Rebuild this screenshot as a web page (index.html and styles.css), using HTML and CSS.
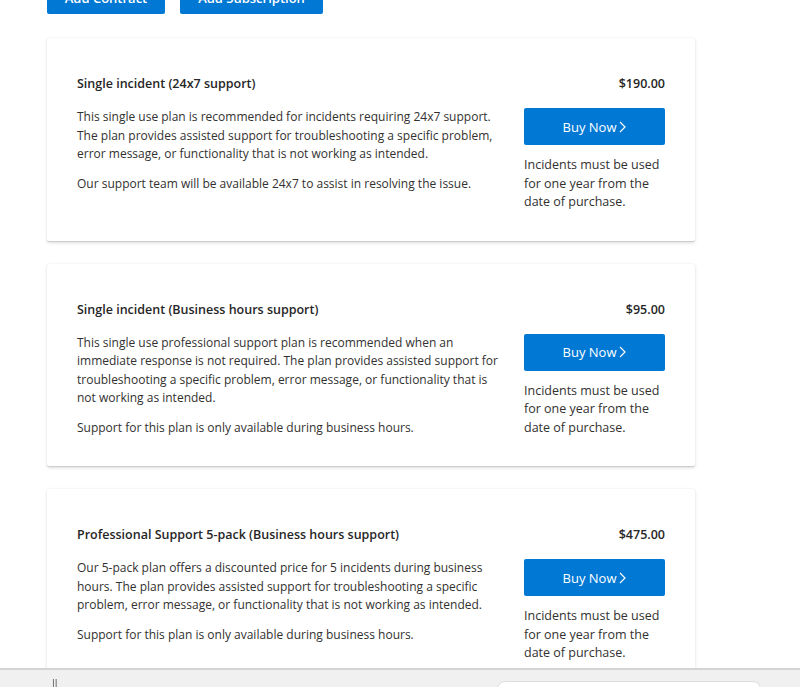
FILE: index.html
```html
<!DOCTYPE html>
<html lang="en">
<head>
  <meta charset="UTF-8">
  <meta name="viewport" content="width=device-width, initial-scale=1.0">
  <title>Support Plans</title>
  <link rel="stylesheet" href="styles.css">
</head>
<body>
  <div class="page">
    <div class="toolbar">
      <button class="btn-top btn-contract">Add Contract</button>
      <button class="btn-top btn-subscription">Add Subscription</button>
    </div>

    <div class="plan">
      <div class="plan-head">
        <span class="plan-title">Single incident (24x7 support)</span>
        <span class="plan-price">$190.00</span>
      </div>
      <div class="plan-body">
        <div class="plan-desc">
          <p>This single use plan is recommended for incidents requiring 24x7 support. The plan provides assisted support for troubleshooting a specific problem, error message, or functionality that is not working as intended.</p>
          <p>Our support team will be available 24x7 to assist in resolving the issue.</p>
        </div>
        <div class="plan-buy">
          <button class="buy">Buy Now <svg class="chev" width="7" height="12" viewBox="0 0 7 12"><path d="M1 1l5 5-5 5" fill="none" stroke="#fff" stroke-width="1.2"/></svg></button>
          <p class="note">Incidents must be used for one year from the date of purchase.</p>
        </div>
      </div>
    </div>

    <div class="plan">
      <div class="plan-head">
        <span class="plan-title">Single incident (Business hours support)</span>
        <span class="plan-price">$95.00</span>
      </div>
      <div class="plan-body">
        <div class="plan-desc">
          <p>This single use professional support plan is recommended when an immediate response is not required. The plan provides assisted support for troubleshooting a specific problem, error message, or functionality that is not working as intended.</p>
          <p>Support for this plan is only available during business hours.</p>
        </div>
        <div class="plan-buy">
          <button class="buy">Buy Now <svg class="chev" width="7" height="12" viewBox="0 0 7 12"><path d="M1 1l5 5-5 5" fill="none" stroke="#fff" stroke-width="1.2"/></svg></button>
          <p class="note">Incidents must be used for one year from the date of purchase.</p>
        </div>
      </div>
    </div>

    <div class="plan">
      <div class="plan-head">
        <span class="plan-title">Professional Support 5-pack (Business hours support)</span>
        <span class="plan-price">$475.00</span>
      </div>
      <div class="plan-body">
        <div class="plan-desc">
          <p>Our 5-pack plan offers a discounted price for 5 incidents during business hours. The plan provides assisted support for troubleshooting a specific problem, error message, or functionality that is not working as intended.</p>
          <p>Support for this plan is only available during business hours.</p>
        </div>
        <div class="plan-buy">
          <button class="buy">Buy Now <svg class="chev" width="7" height="12" viewBox="0 0 7 12"><path d="M1 1l5 5-5 5" fill="none" stroke="#fff" stroke-width="1.2"/></svg></button>
          <p class="note">Incidents must be used for one year from the date of purchase.</p>
        </div>
      </div>
    </div>
  </div>

  <!-- browser download strip overlapping the bottom of the page -->
  <div class="bottom-bar">
    <span class="bar-label">ll</span>
    <div class="bar-box"></div>
  </div>
</body>
</html>
```

FILE: styles.css
```css
body {
  font-family: 'Open Sans', 'Noto Sans', sans-serif;
  margin: 0;
  padding: 0;
  background-color: #fff;
  color: #323130;
  overflow: hidden;
}
.page {
  width: 648px;
  margin-left: 47px;
}
.toolbar {
  display: flex;
  gap: 15px;
  margin-top: -18px;
  margin-bottom: 24px;
}
.btn-top {
  height: 32px;
  background-color: #0078d4;
  color: white;
  border: none;
  border-radius: 2px;
  font-family: inherit;
  font-size: 13px;
  font-weight: 600;
  padding: 0;
}
.btn-contract {
  width: 118px;
}
.btn-subscription {
  width: 143px;
}
.plan {
  background-color: white;
  box-shadow: 0 1.6px 3.6px rgba(0, 0, 0, 0.13), 0 0.3px 0.9px rgba(0, 0, 0, 0.11);
  border-radius: 2px;
  padding: 37px 30px 29px;
  margin-bottom: 23px;
}
.plan-head {
  display: flex;
  justify-content: space-between;
  font-size: 12.5px;
  font-weight: 600;
  line-height: 18px;
  color: #262626;
}
.plan-body {
  display: flex;
  justify-content: space-between;
  margin-top: 15px;
}
.plan-desc {
  width: 430px;
  font-size: 12px;
  line-height: 18.5px;
}
.plan-desc p {
  margin: 0 0 11px;
}
.plan-desc p:last-child {
  margin-bottom: 0;
}
.plan-buy {
  width: 141px;
}
.buy {
  width: 100%;
  height: 37px;
  background-color: #0078d4;
  color: white;
  border: none;
  border-radius: 2px;
  font-family: inherit;
  font-size: 13px;
  cursor: pointer;
  display: flex;
  align-items: center;
  justify-content: center;
  gap: 3px;
}
.chev {
  display: block;
}
.note {
  margin: 11px 0 0;
  font-size: 12.5px;
  line-height: 18.5px;
}
.bottom-bar {
  position: fixed;
  left: 0;
  right: 0;
  bottom: 0;
  height: 17px;
  background-color: #f0f0f0;
  border-top: 2px solid #d4d4d4;
}
.bar-label {
  position: absolute;
  left: 52px;
  top: 5px;
  font-size: 11px;
  color: #666;
}
.bar-box {
  position: absolute;
  left: 497px;
  width: 262px;
  top: 11px;
  height: 20px;
  background-color: #fff;
  border: 1px solid #ddd;
  border-radius: 8px;
}
```
